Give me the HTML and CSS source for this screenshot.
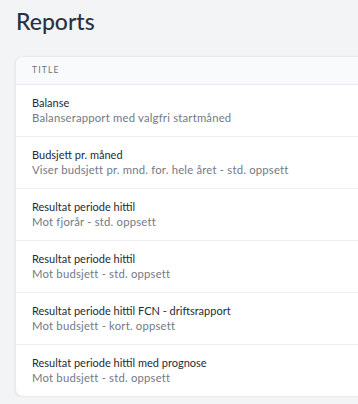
FILE: index.html
```html
<!DOCTYPE html>
<html lang="no">
<head>
    <meta charset="UTF-8">
    <meta name="viewport" content="width=device-width, initial-scale=1.0">
    <title>Reports</title>
    <link rel="stylesheet" href="styles.css">
</head>
<body>
    <div class="page">
        <h1 class="page-title">Reports</h1>

        <div class="card">
            <div class="card-head">Title</div>
            <div class="report">
                <div class="report-name">Balanse</div>
                <div class="report-desc">Balanserapport med valgfri startmåned</div>
            </div>
            <div class="report">
                <div class="report-name">Budsjett pr. måned</div>
                <div class="report-desc">Viser budsjett pr. mnd. for. hele året - std. oppsett</div>
            </div>
            <div class="report">
                <div class="report-name">Resultat periode hittil</div>
                <div class="report-desc">Mot fjorår - std. oppsett</div>
            </div>
            <div class="report">
                <div class="report-name">Resultat periode hittil</div>
                <div class="report-desc">Mot budsjett - std. oppsett</div>
            </div>
            <div class="report">
                <div class="report-name">Resultat periode hittil FCN - driftsrapport</div>
                <div class="report-desc">Mot budsjett - kort. oppsett</div>
            </div>
            <div class="report">
                <div class="report-name">Resultat periode hittil med prognose</div>
                <div class="report-desc">Mot budsjett - std. oppsett</div>
            </div>
        </div>
    </div>
</body>
</html>
```

FILE: styles.css
```css
body {
    margin: 0;
    background-color: #f3f4f6;
    font-family: 'Lato', 'Noto Sans', sans-serif;
    color: #1f2937;
    overflow: hidden;
}
.page {
    padding: 7px 0 0 15px;
    overflow: hidden;
}
.page-title {
    margin: 0 0 21px 1px;
    font-size: 23px;
    line-height: 28px;
    font-weight: 500;
    color: #283142;
}
.card {
    margin-right: -24px;
    background: white;
    border: 1px solid #e8eaee;
    border-radius: 8px;
    box-shadow: 0px 1px 3px rgba(0, 0, 0, 0.08);
    overflow: hidden;
}
.card-head {
    height: 27px;
    line-height: 27px;
    padding-left: 16px;
    background-color: #f9fafb;
    border-bottom: 1px solid #e9ebef;
    font-size: 8.5px;
    letter-spacing: 1.2px;
    text-transform: uppercase;
    color: #6b7280;
}
.report {
    padding: 10px 16px;
    border-bottom: 1px solid #eceef1;
}
.report:last-child {
    border-bottom: none;
}
.report-name {
    font-size: 11px;
    line-height: 15px;
    color: #252b36;
}
.report-desc {
    font-size: 11.3px;
    line-height: 16px;
    letter-spacing: 0.2px;
    color: #737985;
}
```
